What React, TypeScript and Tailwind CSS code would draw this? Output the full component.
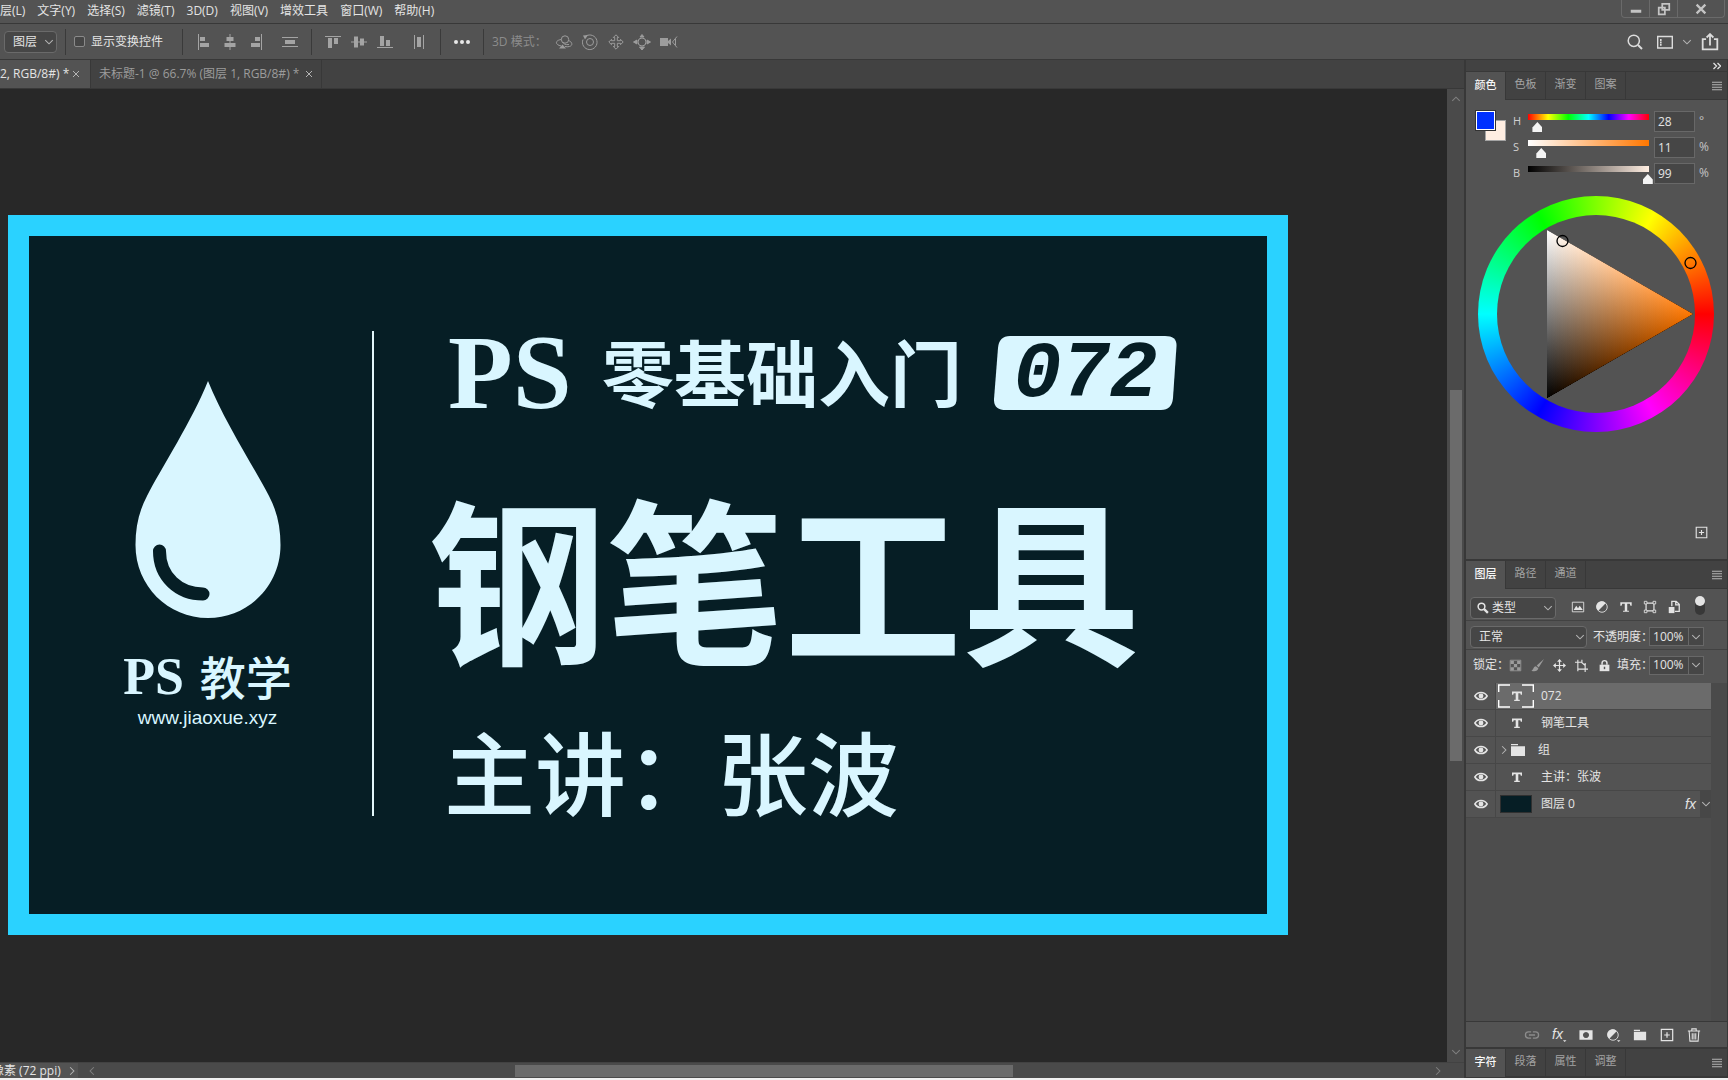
import type { ReactNode } from "react";
import clsx from "clsx";

const MENUS = ["层(L)", "文字(Y)", "选择(S)", "滤镜(T)", "3D(D)", "视图(V)", "增效工具", "窗口(W)", "帮助(H)"];

function Icon({ size = 16, className, children }: { size?: number; className?: string; children: ReactNode }) {
  return (
    <svg
      width={size}
      height={size}
      viewBox="0 0 16 16"
      fill="none"
      stroke="currentColor"
      className={clsx("shrink-0", className)}
      aria-hidden
    >
      {children}
    </svg>
  );
}

function Chevron({ className = "text-[#b4b4b4]" }: { className?: string }) {
  return (
    <Icon size={12} className={clsx("pointer-events-none", className)}>
      <path d="M3 5.500 8 10.500l5-5" strokeWidth={1.400} />
    </Icon>
  );
}

const folder = <path d="M1 2h7v1.300H1zM1 4.300h14V14H1z" fill="currentColor" stroke="none" />;
const plusBox = <path d="M1.500 1.500h13v13h-13zM8 4.800v6.400M4.800 8h6.400" strokeWidth={1.400} />;
const halfCircle = (
  <>
    <circle cx="8" cy="8" r="6" />
    <path d="M12.200 3.800A6 6 0 1 0 3.800 12.200z" fill="currentColor" stroke="none" />
  </>
);
const typeT = <path d="M1.500 2.500h13v4h-1.400l-.8-2.300H9.400v8.100h2v1.200H4.600v-1.200h2V4.200H3.700l-.8 2.300H1.500z" fill="currentColor" stroke="none" />;

const ALIGN_H = [
  { label: "左对齐", d: "M2.500 0v16", fill: "M4 3h5v4H4zM4 9h9v4H4z" },
  { label: "水平居中对齐", d: "M8 0v16", fill: "M4.500 3h7v4h-7zM2.500 9h11v4h-11z" },
  { label: "右对齐", d: "M13.500 0v16", fill: "M7 3h5v4H7zM3 9h9v4H3z" },
];
const ALIGN_V = [
  { label: "顶对齐", d: "M0 2.500h16", fill: "M3 4h4v10H3zM9 4h4v6H9z" },
  { label: "垂直居中对齐", d: "M0 8h16", fill: "M3 2.500h4v11H3zM9 4.500h4v7H9z" },
  { label: "底对齐", d: "M0 13.500h16", fill: "M3 2h4v10H3zM9 6h4v6H9z" },
];

const MODES_3D = [
  {
    label: "环绕移动",
    art: (
      <>
        <circle cx="9" cy="5.500" r="3.700" />
        <path d="M5.300 5.500C1 6-1 8.500 1.500 10.500c1 .8 2 1.200 3.500 1.400M12.500 6.500c4 1.500 4.500 5 1 6-1.500.4-3 .4-4.500 0M6.500 8c1 2 3 3 6.500 2.500" />
        <path d="M3 14.500h7L6.500 10.500z" fill="currentColor" stroke="none" />
      </>
    ),
  },
  {
    label: "滚动",
    art: (
      <>
        <circle cx="8" cy="8" r="3.500" />
        <path d="M4 2A7.300 7.300 0 1 1 1 5.500" />
        <path d="M1 1.500 6 1 3 5.500z" fill="currentColor" stroke="none" />
      </>
    ),
  },
  {
    label: "平移",
    art: <path d="M8 .8 10.700 3.500H9.300v3.200h3.200V5.300L15.200 8l-2.700 2.700V9.300H9.300v3.200h1.400L8 15.200l-2.700-2.700h1.400V9.300H3.500v1.400L.8 8l2.700-2.700v1.400h3.200V3.500H5.300z" />,
  },
  {
    label: "滑动",
    art: (
      <>
        <circle cx="8" cy="8" r="4" />
        <path d="M8 .5 10 3H6zM8 16l2.500-3h-5zM-.5 8 3 6v4zM16.500 8 13 6v4z" fill="currentColor" />
      </>
    ),
  },
  {
    label: "变焦",
    art: (
      <>
        <path d="M0 4h8v3l3-2.500v7L8 9v3H0z" fill="currentColor" stroke="none" />
        <path d="M17 2.500 12.500 8l4.500 5.500M15.500 5v6" />
      </>
    ),
  },
];

function AlignGroup({ items, last }: { items: typeof ALIGN_H; last: { label: string; d: string; fill: string } }) {
  return (
    <div className="flex h-[26px] items-center gap-2 border-l border-[#3a3a3a] px-2">
      <div className="flex">
        {items.map((it) => (
          <button key={it.label} aria-label={it.label} className="flex w-[26px] justify-center">
            <Icon>
              <path d={it.d} />
              <path d={it.fill} fill="currentColor" stroke="none" />
            </Icon>
          </button>
        ))}
      </div>
      <button aria-label={last.label} className="flex w-[26px] justify-center">
        <Icon>
          <path d={last.d} />
          <path d={last.fill} fill="currentColor" stroke="none" />
        </Icon>
      </button>
    </div>
  );
}

function MenuBar() {
  return (
    <header className="flex h-6 shrink-0 items-start justify-between border-b border-[#383838]">
      <nav className="flex gap-3 whitespace-nowrap leading-[22px]">
        {MENUS.map((m) => (
          <button key={m}>{m}</button>
        ))}
      </nav>
      <div className="mr-[3px] flex h-[18px] rounded-b-sm border border-t-0 border-[#6a6a6a] text-[#c4c4c4]">
        <button aria-label="最小化" className="flex w-7 items-center justify-center border-r border-[#6a6a6a]">
          <Icon size={12}>
            <path d="M1 11h14" strokeWidth={4} />
          </Icon>
        </button>
        <button aria-label="还原" className="flex w-7 items-center justify-center border-r border-[#6a6a6a]">
          <Icon size={14}>
            <path d="M6 2h8v7H6zM2 6.500h7V14H2z" strokeWidth={2} />
          </Icon>
        </button>
        <button aria-label="关闭" className="flex w-[46px] items-center justify-center">
          <Icon size={14}>
            <path d="m3 3 10 10M13 3 3 13" strokeWidth={2.600} />
          </Icon>
        </button>
      </div>
    </header>
  );
}

function OptionsBar() {
  return (
    <div className="flex h-9 shrink-0 items-center border-b border-[#383838]">
      <div className="ml-1 flex h-[22px] w-[53px] items-center rounded-sm border border-[#6a6a6a] bg-[#464646] pl-2">
        <select aria-label="自动选择" className="w-[30px] shrink-0 appearance-none bg-transparent outline-none">
          <option>图层</option>
        </select>
        <Chevron />
      </div>
      <div className="ml-2 flex h-[26px] w-[117px] items-center border-l border-[#3a3a3a] pl-2">
        <label className="flex items-center gap-1.5 whitespace-nowrap">
          <input type="checkbox" className="size-[11px] appearance-none rounded-xs border border-[#8a8a8a] bg-[#464646]" />
          显示变换控件
        </label>
      </div>
      <div className="flex text-[#a4a4a4]">
        <AlignGroup items={ALIGN_H} last={{ label: "垂直分布", d: "M0 3.500h16M0 12.500h16", fill: "M3 6h10v4H3z" }} />
        <AlignGroup items={ALIGN_V} last={{ label: "水平分布", d: "M3.500 1v14M12.500 1v14", fill: "M6 3h4v10H6z" }} />
      </div>
      <div className="flex h-[26px] items-center border-x border-[#3a3a3a] px-2">
        <button aria-label="更多选项" className="flex w-[26px] justify-center text-[#e8e8e8]">
          <Icon>
            <g fill="currentColor" stroke="none">
              <circle cx="2" cy="8" r="2" />
              <circle cx="8" cy="8" r="2" />
              <circle cx="14" cy="8" r="2" />
            </g>
          </Icon>
        </button>
      </div>
      <div className="flex items-center pl-2 text-[#9c9c9c]">
        <span className="w-[59px] whitespace-nowrap text-[#8c8c8c]">3D 模式：</span>
        {MODES_3D.map((m) => (
          <button key={m.label} aria-label={m.label} className="flex w-[26px] justify-center">
            <Icon className="overflow-visible">{m.art}</Icon>
          </button>
        ))}
      </div>
      <div className="mr-[9px] ml-auto flex items-center text-[#dcdcdc]">
        <button aria-label="搜索" className="mr-3.5">
          <Icon>
            <circle cx="6.800" cy="6.800" r="5.600" strokeWidth={1.500} />
            <path d="m11 11 4 4" strokeWidth={2} />
          </Icon>
        </button>
        <button aria-label="工作区" className="mr-2">
          <Icon>
            <path d="M.7 2.500h14.600v11.500H.7z" strokeWidth={1.400} />
            <path d="M3 5h1.600v2H3zM3 7.500h1.600v2H3zM3 10h1.600v1.800H3z" fill="currentColor" stroke="none" />
          </Icon>
        </button>
        <Chevron className="mr-2 text-[#b4b4b4]" />
        <button aria-label="共享">
          <Icon size={18}>
            <path d="M4.500 5.500H1.500v9h13v-9h-3M8 11V1.500M5 4l3-3 3 3" strokeWidth={1.600} />
          </Icon>
        </button>
      </div>
    </div>
  );
}

function DocTabs() {
  return (
    <div className="flex h-[29px] shrink-0 border-b border-[#383838] bg-[#424242] whitespace-nowrap">
      <div className="flex w-[91px] items-center justify-between border-r border-[#383838] bg-[#535353] pr-2.5">
        <span>2, RGB/8#) *</span>
        <button aria-label="关闭文档">
          <Icon size={8} className="text-[#b4b4b4]">
            <path d="m2 2 12 12M14 2 2 14" strokeWidth={2} />
          </Icon>
        </button>
      </div>
      <div className="flex items-center gap-1.5 border-r border-[#383838] px-2 text-[#9c9c9c]">
        <span>未标题-1 @ 66.7% (图层 1, RGB/8#) *</span>
        <button aria-label="关闭文档">
          <Icon size={8} className="text-[#b4b4b4]">
            <path d="m2 2 12 12M14 2 2 14" strokeWidth={2} />
          </Icon>
        </button>
      </div>
    </div>
  );
}

function Artboard() {
  return (
    <div className="flex h-[720px] w-[1280px] shrink-0 items-start border-[21px] border-[#2ad2ff] bg-[#061e25] whitespace-nowrap text-[#d9f6ff]">
      <div className="flex w-[343px] flex-col items-center pt-[145px] pl-3.5">
        <svg width="146" height="238" viewBox="0 0 146 238" aria-hidden>
          <path
            d="M73 0C88 38 120 88 134 115C142 130 145.500 146 145.500 164C145.500 205 113 237 73 237C33 237 .5 205 .5 164C.5 146 4 130 12 115C26 88 58 38 73 0z"
            fill="#d9f6ff"
          />
          <path d="M24.500 170C24.500 196 44 213 68 213" fill="none" stroke="#061e25" strokeWidth="13" strokeLinecap="round" />
        </svg>
        <div className="mt-[30px] flex h-[56px] items-center gap-4 leading-none">
          <span className="font-['Liberation_Serif'] text-[52px] font-bold">PS</span>
          <span className="text-[46px] font-medium">教学</span>
        </div>
        <span className="mt-px font-['Liberation_Sans'] text-[19px] leading-6">www.jiaoxue.xyz</span>
      </div>
      <div className="mt-[95px] h-[485px] w-[2px] bg-[#e2f7fb]" />
      <div className="pt-[85px] pl-[74px] leading-none">
        <div className="flex h-[104px] items-center">
          <span className="w-[154px] font-['Liberation_Serif'] text-[106px] font-bold">PS</span>
          <span className="w-[392px] text-[72px] font-bold">零基础入门</span>
          <span className="relative flex h-[74px] w-[183px] items-center justify-center">
            <svg className="absolute inset-0" width="183" height="74" viewBox="0 0 183 74" aria-hidden>
              <path d="M16 0H171Q183 0 182.500 10L179 62Q178 74 167 74H12Q-.5 74 0 63L4 12Q5 0 16 0z" fill="#d9f6ff" />
            </svg>
            <span className="relative pt-1 font-['Liberation_Mono'] text-[80px] font-bold text-[#061e25] italic">072</span>
          </span>
        </div>
        <p className="mt-[69px] -ml-5 text-[178px] font-bold">钢笔工具</p>
        <p className="mt-[57px] -ml-1 text-[91px] font-medium">主讲：张波</p>
      </div>
    </div>
  );
}

function Workspace() {
  return (
    <main className="flex min-w-0 flex-1 flex-col">
      <DocTabs />
      <div className="flex min-h-0 flex-1">
        <div className="min-w-0 flex-1 overflow-hidden bg-[#282828] pt-[126px] pl-2">
          <Artboard />
        </div>
        <div className="flex w-[17px] shrink-0 flex-col items-center bg-[#4a4a4a] py-1">
          <Chevron className="rotate-180 text-[#808080]" />
          <div className="mt-[285px] mb-auto h-[371px] w-3 bg-[#6b6b6b]" />
          <Chevron className="text-[#808080]" />
        </div>
      </div>
      <div className="flex h-4 shrink-0 items-center overflow-hidden border-t border-[#424242] bg-[#4a4a4a]">
        <div className="flex h-4 w-[78px] shrink-0 items-center justify-between bg-[#535353] whitespace-nowrap">
          <span className="-ml-2 leading-4">像素 (72 ppi)</span>
          <Chevron className="-rotate-90 text-[#b4b4b4]" />
        </div>
        <Chevron className="ml-2 rotate-90 text-[#808080]" />
        <div className="flex flex-1 pl-[417px]">
          <div className="h-3 w-[498px] bg-[#6b6b6b]" />
        </div>
        <Chevron className="mr-5 -rotate-90 text-[#808080]" />
      </div>
    </main>
  );
}

function PanelTabs({ tabs }: { tabs: string[] }) {
  return (
    <div className="flex h-7 shrink-0 items-stretch bg-[#424242] text-[11px]">
      {tabs.map((t, i) => (
        <button
          key={t}
          className={clsx(
            "w-10 border-r border-[#383838] pb-[2px]",
            i === 0 ? "bg-[#535353] font-medium text-[#f8f8f8]" : "border-b text-[#a4a4a4]",
          )}
        >
          {t}
        </button>
      ))}
      <div className="flex flex-1 items-center justify-end border-b border-[#383838] pr-[5px]">
        <button aria-label="面板菜单">
          <Icon size={10} className="text-[#b4b4b4]">
            <path d="M0 2h16M0 6h16M0 10h16M0 14h16" strokeWidth={1.800} />
          </Icon>
        </button>
      </div>
    </div>
  );
}

const CHANNELS = [
  {
    id: "H",
    value: 28,
    max: 360,
    unit: "°",
    track: "bg-[linear-gradient(to_right,#f00,#ff0,#0f0,#0ff,#00f,#f0f,#f00)]",
  },
  { id: "S", value: 11, max: 100, unit: "%", track: "bg-[linear-gradient(to_right,#fff,#ff7700)]" },
  { id: "B", value: 99, max: 100, unit: "%", track: "bg-[linear-gradient(to_right,#000,#ffeee2)]" },
];

function ColorWheel() {
  return (
    <div className="relative mx-auto size-[236px] rounded-full bg-[conic-gradient(from_90deg,#f00,#f0f,#00f,#0ff,#0f0,#ff0,#f00)] p-[19px]">
      <div className="size-full rounded-full bg-[#535353]" />
      <svg className="absolute inset-0 isolate" width="236" height="236" viewBox="0 0 236 236" aria-hidden>
        <defs>
          <linearGradient id="hue" gradientUnits="userSpaceOnUse" x1="69" y1="0" x2="215" y2="0">
            <stop offset="0" stopColor="#000" />
            <stop offset="1" stopColor="#ff7700" />
          </linearGradient>
          <linearGradient id="white" gradientUnits="userSpaceOnUse" x1="142" y1="160" x2="69" y2="34">
            <stop offset="0" stopColor="#000" />
            <stop offset="1" stopColor="#fff" />
          </linearGradient>
        </defs>
        <path d="M69 34 215 118 69 202z" fill="url(#hue)" />
        <path d="M69 34 215 118 69 202z" fill="url(#white)" className="mix-blend-plus-lighter" />
        <circle cx="84.500" cy="45" r="5.500" fill="none" stroke="#000" strokeWidth="1.300" />
        <circle cx="212.500" cy="67" r="5.500" fill="none" stroke="#000" strokeWidth="1.300" />
      </svg>
    </div>
  );
}

function ColorPanel() {
  return (
    <section className="flex h-[489px] shrink-0 flex-col border-b-2 border-[#383838]">
      <PanelTabs tabs={["颜色", "色板", "渐变", "图案"]} />
      <div className="flex pt-2 pl-2.5">
        <div className="relative mt-[3px] h-[30px] w-[30px]">
          <button aria-label="背景色" className="absolute right-0 bottom-0 size-[21px] border border-[#a4a4a4] bg-[#ffeee2]" />
          <button aria-label="前景色" className="absolute top-0 left-0 size-[19px] border border-white bg-[#0030ff] outline outline-[#333]" />
        </div>
        <div className="flex flex-col">
          {CHANNELS.map((c) => (
            <div key={c.id} className="flex h-[26px] items-center">
              <label htmlFor={c.id} className="w-[15px] pl-[7px] text-[11px] text-[#d0d0d0]">
                {c.id}
              </label>
              <input
                id={c.id}
                type="range"
                min={0}
                max={c.max}
                defaultValue={c.value}
                className={clsx(
                  "mt-1 ml-[2px] h-[18px] w-[131px] appearance-none bg-[length:121px_6px] bg-top bg-no-repeat",
                  "[&::-webkit-slider-thumb]:mt-2 [&::-webkit-slider-thumb]:h-[10px] [&::-webkit-slider-thumb]:w-[10px] [&::-webkit-slider-thumb]:appearance-none [&::-webkit-slider-thumb]:bg-[#f4f4f4] [&::-webkit-slider-thumb]:[clip-path:polygon(50%_0,100%_55%,100%_100%,0_100%,0_55%)]",
                  c.track,
                )}
              />
              <input
                aria-label={c.id + " 数值"}
                defaultValue={c.value}
                className="h-[21px] w-[41px] border border-[#686868] bg-[#464646] px-[3px] outline-none"
              />
              <span className="ml-1 text-[#c4c4c4]">{c.unit}</span>
            </div>
          ))}
        </div>
      </div>
      <div className="mt-[10px] pr-px">
        <ColorWheel />
      </div>
      <button aria-label="添加到色板" className="mt-auto mr-[19px] mb-5 self-end">
        <Icon size={13}>{plusBox}</Icon>
      </button>
    </section>
  );
}

const FILTERS = [
  {
    label: "像素图层滤镜",
    art: (
      <>
        <path d="M1.500 2.500h13v11h-13z" />
        <path d="M3 11.500 6 6.500l2 3 2-3 3.500 5z" fill="currentColor" stroke="none" />
      </>
    ),
  },
  { label: "调整图层滤镜", art: halfCircle },
  { label: "文字图层滤镜", art: typeT },
  {
    label: "形状图层滤镜",
    art: (
      <>
        <path d="M3.500 3.500h9v9h-9z" strokeWidth={1.400} />
        <path d="M1.500 1.500h3v3h-3zM11.500 1.500h3v3h-3zM1.500 11.500h3v3h-3zM11.500 11.500h3v3h-3z" fill="#535353" />
      </>
    ),
  },
  {
    label: "智能对象滤镜",
    art: (
      <>
        <path d="M5.500 7V1.500h5L14 5v8H9M10 2v3.500h4" strokeWidth={1.500} />
        <path d="M2 8h6.500v7H2z" fill="currentColor" stroke="none" />
      </>
    ),
  },
];

const LOCKS = [
  {
    label: "锁定透明像素",
    dim: true,
    art: (
      <>
        <path d="M1.500 1.500h13v13h-13z" />
        <path d="M2 2h4v4H2zM10 2h4v4h-4zM6 6h4v4H6zM2 10h4v4H2zM10 10h4v4h-4z" fill="currentColor" stroke="none" />
      </>
    ),
  },
  {
    label: "锁定图像像素",
    dim: true,
    art: <path d="M16 0 7 8l2.500 2.500zM6 9c-3 0-2.500 4-5.500 5.500 4 1.500 8 .5 8.500-3z" fill="currentColor" stroke="none" />,
  },
  {
    label: "锁定位置",
    dim: false,
    art: (
      <>
        <path d="M8 2v12M2 8h12" strokeWidth={1.500} />
        <path d="M8 0 11 3.500H5zM8 16l3-3.500H5zM0 8l3.500-3v6zM16 8l-3.500-3v6z" fill="currentColor" stroke="none" />
      </>
    ),
  },
  {
    label: "防止自动嵌套",
    dim: false,
    art: <path d="M3.500 1v14M0 4h8.500M12.500 8v8M3.500 12.500H16M8.500 1v3.500l4 3.500V5" strokeWidth={1.400} />,
  },
  {
    label: "锁定全部",
    dim: false,
    art: (
      <>
        <path d="M5 7V5a3 3 0 0 1 6 0v2" strokeWidth={1.800} />
        <path d="M2 7h12v8H2z" fill="currentColor" stroke="none" />
        <path d="M8 9.500v3" stroke="#535353" strokeWidth={1.800} />
      </>
    ),
  },
];

function PercentField({ label, id }: { label: string; id: string }) {
  return (
    <div className="flex items-center whitespace-nowrap">
      <label htmlFor={id}>{label}</label>
      <div className="-ml-1 flex h-[19px] items-center border border-[#686868] bg-[#464646]">
        <input id={id} defaultValue="100%" className="w-[38px] bg-transparent pl-[3px] outline-none" />
        <button aria-label={label + "滑块"} className="flex h-full w-[15px] items-center justify-center border-l border-[#686868]">
          <Chevron />
        </button>
      </div>
    </div>
  );
}

const LAYERS = [
  { name: "072", kind: "text" },
  { name: "钢笔工具", kind: "text" },
  { name: "组", kind: "group" },
  { name: "主讲：张波", kind: "text" },
  { name: "图层 0", kind: "pixel" },
];

function LayerThumb({ kind, selected }: { kind: string; selected: boolean }) {
  if (kind === "pixel") return <span className="mr-[9px] ml-1 h-[18px] w-8 shrink-0 border border-[#303030] bg-[#061e25]" />;
  if (kind === "group") {
    return (
      <span className="mr-3 ml-[2px] flex w-[28px] items-center">
        <Chevron className="-rotate-90 text-[#b4b4b4]" />
        <Icon>{folder}</Icon>
      </span>
    );
  }
  return (
    <svg width="36" height="24" viewBox="0 0 36 24" className="mr-[7px] ml-[2px] shrink-0" fill="none" aria-hidden>
      {selected && <path d="M.7 8V1H12M24 1h11.300v7M35.300 16v7H24M12 23H.7v-7" stroke="#fff" strokeWidth="1.400" />}
      <path d="M14 7.500h10v3.200h-1.200l-.5-1.500H20.300v6.600h1.500v1.200h-5.600v-1.200h1.500V9.200h-2l-.5 1.500H14z" fill="#e4e4e4" />
    </svg>
  );
}

function LayerRow({ name, kind, selected }: { name: string; kind: string; selected: boolean }) {
  return (
    <li className="flex h-[27px] border-b border-[#474747] bg-[#535353]">
      <button aria-label="显示图层" className="flex w-[30px] items-center justify-center border-r border-[#474747]">
        <Icon size={14}>
          <path d="M1 8C4 2.700 12 2.700 15 8c-3 5.300-11 5.300-14 0z" strokeWidth={1.800} />
          <circle cx="8" cy="8" r="2.800" fill="currentColor" stroke="none" />
        </Icon>
      </button>
      <div className={clsx("flex min-w-0 flex-1 items-center", selected && "bg-[#6b6b6b]")}>
        <LayerThumb kind={kind} selected={selected} />
        <span className="whitespace-nowrap">{name}</span>
        {kind === "pixel" && (
          <span className="ml-auto flex h-full items-center">
            <i className="mr-1 font-['Liberation_Sans'] text-[14px]">fx</i>
            <button aria-label="展开效果" className="flex h-full w-[11px] items-center justify-center bg-[#474747]">
              <Chevron />
            </button>
          </span>
        )}
      </div>
    </li>
  );
}

const corner = <path d="M12.500 14h4l-2 2z" fill="currentColor" stroke="none" />;

const LAYER_ACTIONS = [
  {
    label: "链接图层",
    art: (
      <g className="text-[#8c8c8c]" stroke="currentColor">
        <path d="M7 4.500H4a3.500 3.500 0 0 0 0 7h3M9 4.500h3a3.500 3.500 0 0 1 0 7H9M4.500 8h7" strokeWidth={1.500} />
      </g>
    ),
  },
  {
    label: "添加图层样式",
    art: (
      <>
        <text x="0" y="13" fontSize="16" fontStyle="italic" fontFamily="Liberation Sans" fill="currentColor" stroke="none">
          fx
        </text>
        {corner}
      </>
    ),
  },
  {
    label: "添加蒙版",
    art: <path fillRule="evenodd" d="M.5 2.500h15v11H.5zM8 4.500a3.500 3.500 0 1 0 .01 0z" fill="currentColor" stroke="none" />,
  },
  {
    label: "新建调整图层",
    art: (
      <>
        {halfCircle}
        {corner}
      </>
    ),
  },
  { label: "新建组", art: folder },
  { label: "新建图层", art: plusBox },
  {
    label: "删除图层",
    art: <path d="M1 3.500h14M5.500 3V1h5v2M2.500 4l.8 11h9.400l.8-11M6 6v7M8 6v7M10 6v7" strokeWidth={1.200} />,
  },
];

function LayersPanel() {
  return (
    <section className="flex min-h-0 flex-1 flex-col border-b-2 border-[#383838]">
      <PanelTabs tabs={["图层", "路径", "通道"]} />
      <div className="flex h-8 shrink-0 items-end border-b border-[#424242] pb-px pl-1">
        <div className="flex h-[22px] w-[86px] items-center rounded-sm border border-[#6a6a6a] bg-[#464646] pr-px pl-1.5">
          <Icon size={12}>
            <circle cx="6" cy="6" r="4.500" strokeWidth={2} />
            <path d="m9.500 9.500 5 5" strokeWidth={3} />
          </Icon>
          <select aria-label="滤镜类型" className="ml-[3px] min-w-0 flex-1 appearance-none bg-transparent outline-none">
            <option>类型</option>
          </select>
          <Chevron />
        </div>
        <div className="ml-2.5 flex h-6 items-center">
          {FILTERS.map((f) => (
            <button key={f.label} aria-label={f.label} className="flex w-6 justify-center">
              <Icon size={14}>{f.art}</Icon>
            </button>
          ))}
        </div>
        <button aria-label="打开图层滤镜" className="mb-1 ml-[9px] flex h-[19px] w-2.5 rounded-full bg-[#383838]">
          <span className="size-2.5 rounded-full bg-[#e4e4e4]" />
        </button>
      </div>
      <div className="flex h-[29px] shrink-0 items-center border-b border-[#424242] pt-[3px] pl-1">
        <div className="mr-[6px] flex h-[22px] w-[117px] items-center rounded-sm border border-[#6a6a6a] bg-[#464646] pl-2">
          <select aria-label="混合模式" className="min-w-0 flex-1 appearance-none bg-transparent outline-none">
            <option>正常</option>
          </select>
          <Chevron />
        </div>
        <PercentField label="不透明度：" id="opacity" />
      </div>
      <div className="flex h-[33px] shrink-0 items-center pb-[3px] pl-[7px]">
        <span className="w-[31px] whitespace-nowrap">锁定：</span>
        <div className="mr-[2px] flex w-[111px] justify-between">
          {LOCKS.map((l) => (
            <button key={l.label} aria-label={l.label} className={clsx("flex w-[22px] justify-center", l.dim && "text-[#9c9c9c]")}>
              <Icon size={13}>{l.art}</Icon>
            </button>
          ))}
        </div>
        <PercentField label="填充：" id="fill" />
      </div>
      <div className="flex min-h-0 flex-1 bg-[#4d4d4d]">
        <ul className="flex-1">
          {LAYERS.map((l, i) => (
            <LayerRow key={l.name} {...l} selected={i === 0} />
          ))}
        </ul>
        <div className="w-4 bg-[#4a4a4a]" />
      </div>
      <div className="flex h-[26px] shrink-0 items-center justify-end border-t border-[#383838] pr-[20px]">
        {LAYER_ACTIONS.map((a) => (
          <button key={a.label} aria-label={a.label} className="flex w-[27px] justify-center">
            <Icon size={14} className="overflow-visible">
              {a.art}
            </Icon>
          </button>
        ))}
      </div>
    </section>
  );
}

export default function App() {
  return (
    <div className="flex h-screen flex-col overflow-hidden border-b-2 border-[#f0f0f0] bg-[#535353] font-['Open_Sans','Noto_Sans_CJK_SC',sans-serif] text-[12px] text-[#e4e4e4]">
      <MenuBar />
      <OptionsBar />
      <div className="flex min-h-0 flex-1">
        <Workspace />
        <aside className="flex w-[264px] shrink-0 flex-col border-r border-b border-l-2 border-[#383838]">
          <div className="flex h-3 shrink-0 items-center justify-end border-b border-[#383838] bg-[#424242] pr-1.5">
            <button aria-label="折叠面板">
              <Icon size={8}>
                <path d="m1 2 6 6-6 6M9 2l6 6-6 6" strokeWidth={2.500} />
              </Icon>
            </button>
          </div>
          <ColorPanel />
          <LayersPanel />
          <PanelTabs tabs={["字符", "段落", "属性", "调整"]} />
        </aside>
      </div>
    </div>
  );
}
